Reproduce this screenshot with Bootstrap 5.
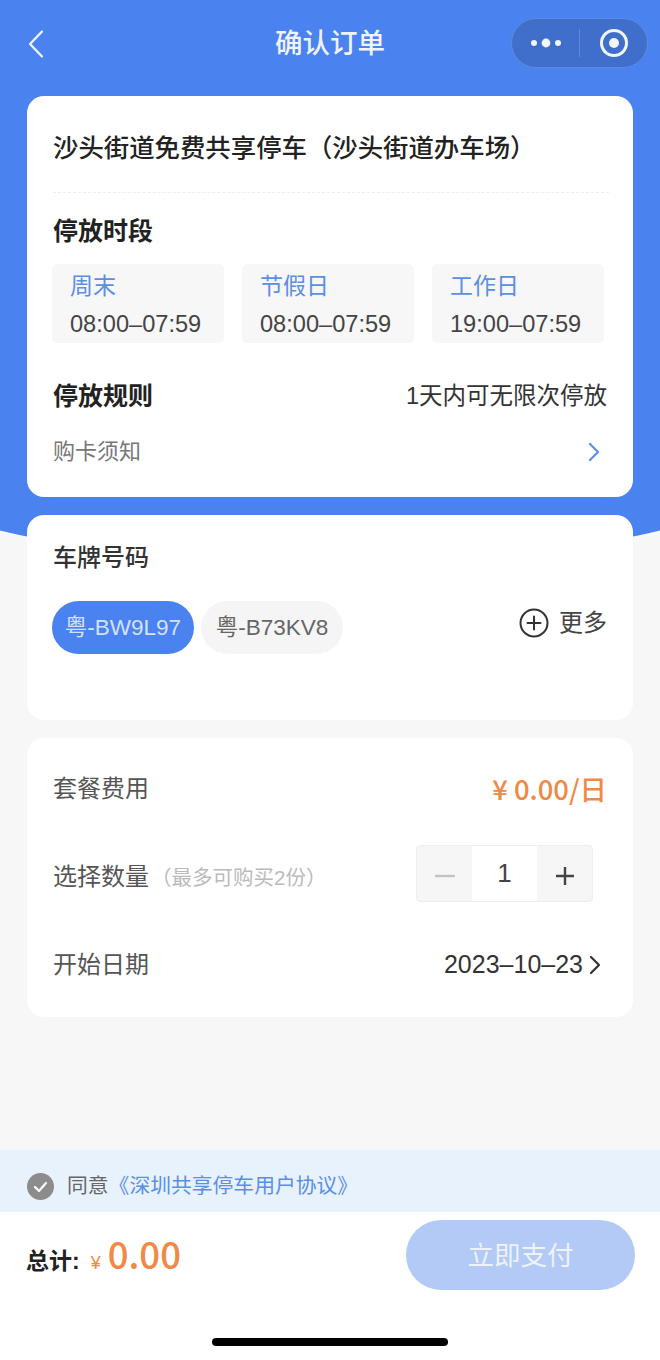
<!doctype html>
<html lang="zh-CN">
<head>
<meta charset="utf-8">
<title>确认订单</title>
<link href="https://cdn.jsdelivr.net/npm/bootstrap@5.3.0/dist/css/bootstrap.min.css" rel="stylesheet">
<style>
html,body{margin:0;background:#f7f7f7}
body{font-family:"Liberation Sans","Noto Sans CJK SC",sans-serif;color:#222}
.screen{position:relative;width:660px;height:1360px;overflow:hidden;background:#f7f7f7}
.sky{position:absolute;top:0;left:-70px;right:-70px;height:560px;background:#4a82f0;border-radius:0 0 50% 50%/0 0 68px 68px}
.stack{position:relative;height:100%}
.topbar{margin-top:18px;padding:0 12px;height:50px}
.back-slot{width:137px;padding:2px 0 0 15px}
.page-title{font-size:27.5px;font-weight:500;color:#eef3fd;line-height:50px;margin:2px 0 0}
.capsule{width:137px;height:50px;border-radius:25px;background:#406fcb;border:1px solid #5c8be3}
.capsule>div{flex:1 1 50%;height:100%}
.capsule-rule{width:1px;height:28px;background:#5f8bdf;flex:none}
.sheet{margin:0 27px;border:0;border-radius:17px;background:#fff}
.sheet-a{margin-top:28px;height:401px;padding:35px 26px 0}
.sheet-b{margin-top:18px;height:205px;padding:27px 26px 0}
.sheet-c{margin-top:18px;height:279px;padding:7px 26px 8px}
.lot-name{font-size:25.4px;font-weight:500;line-height:34px;color:#222;white-space:nowrap}
.dash-line{margin-top:27px;border-top:1px dashed #eee;margin-right:-2px}
.sec-title{font-size:25px;font-weight:600;line-height:34px;color:#222}
.sec-gap{margin-top:21px}
.tiles{margin-top:16px;gap:18px;margin-left:-1px;margin-right:3px}
.tile{flex:1 1 0;height:79px;background:#f7f7f7;border-radius:5px;padding:6px 0 0 18px}
.tile-label{font-size:23px;line-height:32px;color:#5a8fe6}
.tile-time{font-size:23.6px;line-height:34px;margin-top:5px;color:#444;white-space:nowrap}
.rule-row{margin-top:36px}
.rule-value{font-size:23.5px;line-height:34px;color:#333}
.notice-row{margin-top:24px;height:30px}
.notice-text{font-size:22px;line-height:30px;color:#777}
.notice-arrow{margin-right:6px}
.plate-title{font-size:24px;line-height:32px;color:#333;font-weight:500}
.plates{margin-top:27px}
.plate{height:53px;width:142px;border-radius:27px;font-size:22.5px;line-height:53px;text-align:center;white-space:nowrap}
.plate-on{background:#4a82f0;color:#d3e1fb;margin-left:-1px}
.plate-off{background:#f5f5f5;color:#666;margin-left:7px}
.more-btn{height:43px;gap:10px;font-size:24px;color:#444}
.fee-row{height:88px}
.fee-label{font-size:24px;color:#555}
.fee-note{font-size:20.5px;color:#bbb;margin-left:2px}
.fee-price{font-family:"Noto Sans CJK SC","Liberation Sans",sans-serif;font-size:27.4px;font-weight:500;color:#ee8a45}
.stepper{width:177px;height:57px;margin:0 14px 7px 0;border:1px solid #eee;border-radius:4px;background:#f6f6f6}
.step-btn{width:55px;height:100%;padding-top:5px}
.step-num{flex:1;height:100%;background:#fff;font-size:26px;line-height:55px;text-align:center;color:#444}
.date-value{font-size:25px;color:#333;gap:6px;margin-right:6px}
.spacer{flex:1 1 auto}
.agree{height:62px;padding:10px 0 0 27px;background:#e8f2fd;gap:13px;font-size:20.8px}
.agree-text{color:#666;white-space:nowrap}
.agree-link{color:#5a8fe6}
.paybar{height:148px;background:#fff}
.pay-row{padding:8px 25px 0 26px}
.total{margin-top:7px;line-height:44px;white-space:nowrap}
.total-label{font-size:23px;font-weight:600;color:#222}
.total-cur{font-size:18px;color:#ee8a45;margin-left:11px}
.total-num{font-family:"Noto Sans CJK SC","Liberation Sans",sans-serif;font-size:36.5px;font-weight:500;color:#ee8a45;margin-left:7px}
.pay-btn,.pay-btn:disabled{width:229px;height:70px;border:0;border-radius:35px;background:#b2caf5;color:#edf2fc;font-size:26.5px;padding:4px 0 0;opacity:1}
.home-bar{width:236px;height:8px;border-radius:4px;background:#000;margin:48px auto 0}
</style>
</head>
<body>
<div class="screen">
  <div class="sky"></div>
  <div class="stack d-flex flex-column">
    <div class="topbar d-flex align-items-center justify-content-between">
      <div class="back-slot d-flex align-items-center">
        <svg width="18" height="30" viewBox="0 0 18 30" fill="none" stroke="#f1f5fe" stroke-width="2.3" stroke-linecap="round" stroke-linejoin="round"><path d="M15 2.5 3 15l12 12.5"/></svg>
      </div>
      <h1 class="page-title">确认订单</h1>
      <div class="capsule d-flex align-items-center">
        <div class="d-flex align-items-center justify-content-center">
          <svg width="32" height="10" viewBox="0 0 32 10" fill="#f1f5fe"><circle cx="4" cy="5" r="3"/><circle cx="16" cy="5" r="4.4"/><circle cx="28" cy="5" r="3"/></svg>
        </div>
        <span class="capsule-rule"></span>
        <div class="d-flex align-items-center justify-content-center">
          <svg width="30" height="30" viewBox="0 0 30 30"><circle cx="15" cy="15" r="12.5" fill="none" stroke="#f1f5fe" stroke-width="3"/><circle cx="15" cy="15" r="5" fill="#f1f5fe"/></svg>
        </div>
      </div>
    </div>

    <div class="card sheet sheet-a">
      <div class="lot-name">沙头街道免费共享停车（沙头街道办车场）</div>
      <div class="dash-line"></div>
      <div class="sec-title sec-gap">停放时段</div>
      <div class="tiles d-flex">
        <div class="tile"><div class="tile-label">周末</div><div class="tile-time">08:00–07:59</div></div>
        <div class="tile"><div class="tile-label">节假日</div><div class="tile-time">08:00–07:59</div></div>
        <div class="tile"><div class="tile-label">工作日</div><div class="tile-time">19:00–07:59</div></div>
      </div>
      <div class="rule-row d-flex justify-content-between">
        <div class="sec-title">停放规则</div>
        <div class="rule-value">1天内可无限次停放</div>
      </div>
      <div class="notice-row d-flex justify-content-between align-items-center">
        <div class="notice-text">购卡须知</div>
        <svg class="notice-arrow" width="14" height="20" viewBox="0 0 14 20" fill="none" stroke="#5a8fe6" stroke-width="2.2" stroke-linecap="round" stroke-linejoin="round"><path d="M3 2l8 8-8 8"/></svg>
      </div>
    </div>

    <div class="card sheet sheet-b">
      <div class="plate-title">车牌号码</div>
      <div class="plates d-flex align-items-start">
        <div class="plate plate-on">粤-BW9L97</div>
        <div class="plate plate-off">粤-B73KV8</div>
        <div class="more-btn d-flex align-items-center ms-auto">
          <svg width="30" height="30" viewBox="0 0 30 30" fill="none" stroke="#333" stroke-width="2"><circle cx="15" cy="15" r="13.5"/><path d="M15 8.5v13M8.5 15h13" stroke-linecap="round"/></svg>
          <span>更多</span>
        </div>
      </div>
    </div>

    <div class="card sheet sheet-c">
      <div class="fee-row d-flex align-items-center justify-content-between">
        <div class="fee-label">套餐费用</div>
        <div class="fee-price">¥ 0.00/日</div>
      </div>
      <div class="fee-row d-flex align-items-center justify-content-between">
        <div class="fee-label">选择数量<span class="fee-note">（最多可购买2份）</span></div>
        <div class="stepper d-flex align-items-center">
          <div class="step-btn d-flex align-items-center justify-content-center">
            <svg width="20" height="4" viewBox="0 0 20 4"><rect width="20" height="2.4" y=".8" fill="#c4c4c4"/></svg>
          </div>
          <div class="step-num">1</div>
          <div class="step-btn d-flex align-items-center justify-content-center">
            <svg width="20" height="20" viewBox="0 0 20 20" stroke="#444" stroke-width="2.4"><path d="M10 1v18M1 10h18"/></svg>
          </div>
        </div>
      </div>
      <div class="fee-row d-flex align-items-center justify-content-between">
        <div class="fee-label">开始日期</div>
        <div class="date-value d-flex align-items-center">
          <span>2023–10–23</span>
          <svg width="12" height="20" viewBox="0 0 12 20" fill="none" stroke="#333" stroke-width="2.2" stroke-linecap="round" stroke-linejoin="round"><path d="M2 2l8 8-8 8"/></svg>
        </div>
      </div>
    </div>

    <div class="spacer"></div>

    <div class="agree d-flex align-items-center">
      <svg width="27" height="27" viewBox="0 0 27 27"><circle cx="13.5" cy="13.5" r="13.5" fill="#8c8c8c"/><path d="M8 14l4 4 7-8" fill="none" stroke="#fff" stroke-width="2.2" stroke-linecap="round" stroke-linejoin="round"/></svg>
      <div class="agree-text">同意<span class="agree-link">《深圳共享停车用户协议》</span></div>
    </div>

    <div class="paybar">
      <div class="pay-row d-flex align-items-center justify-content-between">
        <div class="total"><span class="total-label">总计:</span><span class="total-cur">¥</span><span class="total-num">0.00</span></div>
        <button type="button" class="btn pay-btn" disabled>立即支付</button>
      </div>
      <div class="home-bar"></div>
    </div>
  </div>
</div>
<script src="https://cdn.jsdelivr.net/npm/bootstrap@5.3.0/dist/js/bootstrap.bundle.min.js"></script>
</body>
</html>
